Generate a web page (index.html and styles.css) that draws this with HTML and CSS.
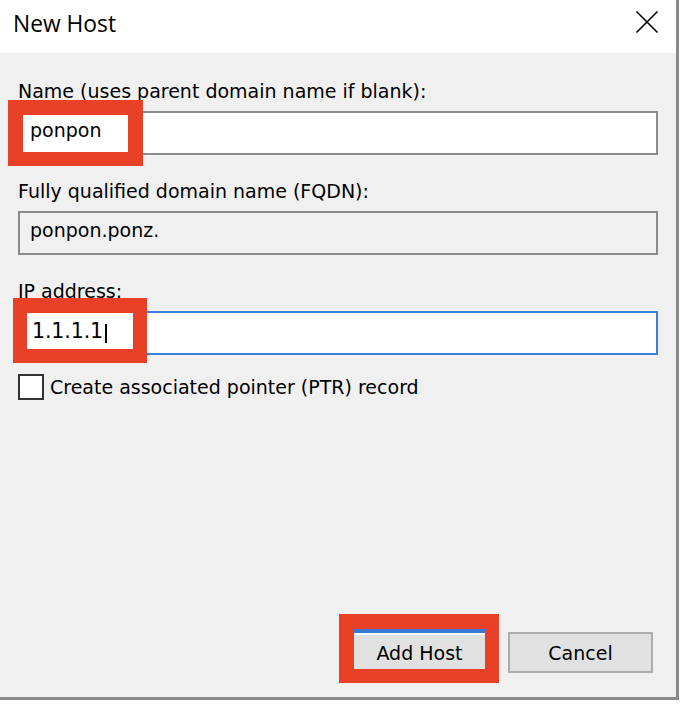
FILE: index.html
```html
<!DOCTYPE html>
<html lang="en">
<head>
<meta charset="utf-8">
<title>New Host</title>
<link rel="stylesheet" href="styles.css">
</head>
<body>
<div class="window">
  <div class="titlebar">
    <span class="title">New Host</span>
    <svg class="close" width="24" height="24" viewBox="0 0 24 24" aria-hidden="true">
      <path d="M1.5 1.5 L22.5 22.5 M22.5 1.5 L1.5 22.5" stroke="#000" stroke-width="1.6" fill="none"/>
    </svg>
  </div>
  <div class="content">
    <div class="label label-first">Name (uses parent domain name if blank):</div>
    <div class="textbox">ponpon</div>

    <div class="label">Fully qualified domain name (FQDN):</div>
    <div class="textbox readonly">ponpon.ponz.</div>

    <div class="label">IP address:</div>
    <div class="textbox focused"><span class="ip">1.1.1.1</span><span class="caret"></span></div>

    <div class="check-row">
      <span class="checkbox"></span>
      <span class="check-label">Create associated pointer (PTR) record</span>
    </div>

    <div class="buttons">
      <div class="btn btn-default">Add Host</div>
      <div class="btn">Cancel</div>
    </div>
  </div>

  <div class="mark mark-name"></div>
  <div class="mark mark-ip"></div>
  <div class="mark mark-btn"></div>
</div>
</body>
</html>
```

FILE: styles.css
```css
html, body {
  margin: 0;
  padding: 0;
  background: #ffffff;
}

.window {
  position: relative;
  width: 676px;
  height: 697px;
  border-right: 3px solid #8a8a8a;
  border-bottom: 3px solid #8a8a8a;
  display: flex;
  flex-direction: column;
  font-family: "DejaVu Sans", "Liberation Sans", sans-serif;
  font-size: 19px;
  color: #000;
}

.titlebar {
  height: 53px;
  flex: none;
  background: #ffffff;
  display: flex;
  align-items: center;
  justify-content: space-between;
  padding: 0 17px 0 13px;
}

.title {
  font-family: "Open Sans", "Liberation Sans", sans-serif;
  font-size: 22.8px;
  margin-top: -7px;
}

.close {
  display: block;
  margin-top: -9px;
  width: 24px;
  height: 24px;
}

.content {
  flex: 1;
  background: #f0f0f0;
  display: flex;
  flex-direction: column;
  padding: 0 18px 21px 18px;
}

.label {
  line-height: 22px;
  height: 22px;
  margin-top: 25px;
  white-space: nowrap;
}

.label-first {
  margin-top: 27px;
}

.textbox {
  margin-top: 9px;
  height: 44px;
  box-sizing: border-box;
  border: 2px solid #8a8a8a;
  background: #ffffff;
  padding: 6px 10px 0 10px;
  line-height: 22px;
  display: flex;
  align-items: flex-start;
}

.textbox.readonly {
  background: #f0f0f0;
}

.textbox.focused {
  border-color: #3b7fd9;
  padding-left: 12px;
  padding-top: 7px;
}

.ip {
  font-size: 20.5px;
  letter-spacing: -0.1px;
}

.caret {
  width: 2px;
  height: 19px;
  background: #000;
  margin-left: 2px;
  margin-top: 4px;
}

.check-row {
  margin-top: 19px;
  display: flex;
  align-items: center;
  gap: 6px;
}

.checkbox {
  width: 26px;
  height: 26px;
  box-sizing: border-box;
  border: 2px solid #333333;
  background: #ffffff;
}

.check-label {
  line-height: 22px;
}

.buttons {
  margin-top: auto;
  margin-right: 5px;
  display: flex;
  justify-content: flex-end;
  align-items: center;
  gap: 13px;
}

.btn {
  width: 145px;
  height: 41px;
  box-sizing: border-box;
  border: 2px solid #adadad;
  background: #e1e1e1;
  display: flex;
  align-items: center;
  justify-content: center;
  line-height: 22px;
}

.btn-default {
  width: 151px;
  height: 47px;
  border: 4px solid #3b78d6;
  box-shadow: inset 0 0 0 2px #ffffff;
}

.mark {
  position: absolute;
  box-sizing: border-box;
  border: 15px solid #e84127;
  border-bottom-width: 14px;
}

.mark-name {
  left: 8px;
  top: 100px;
  width: 135px;
  height: 66px;
}

.mark-ip {
  left: 13px;
  top: 298px;
  width: 134px;
  height: 65px;
  border-left-width: 14px;
  border-right-width: 14px;
}

.mark-btn {
  left: 339px;
  top: 614px;
  width: 160px;
  height: 69px;
  border-right-width: 14px;
}
```
